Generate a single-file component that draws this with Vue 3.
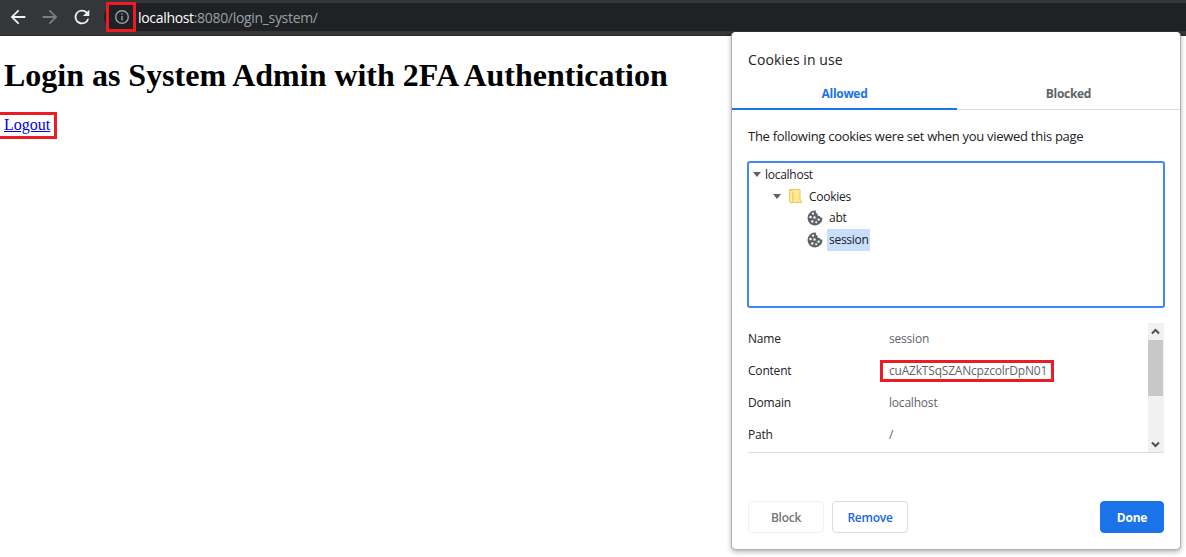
<script setup>
const fields = [
  { name: 'Name', value: 'session', cls: 'f-name' },
  { name: 'Content', value: 'cuAZkTSqSZANcpzcolrDpN01', cls: 'f-content', marked: true },
  { name: 'Domain', value: 'localhost', cls: 'f-domain' },
  { name: 'Path', value: '/', cls: 'f-path' },
]
const cookies = [
  { name: 'abt', selected: false },
  { name: 'session', selected: true },
]
</script>

<template>
  <div class="window">
    <header class="toolbar">
      <svg class="nav" viewBox="0 0 24 24"><path d="M20 11H7.8l5.6-5.6L12 4l-8 8 8 8 1.4-1.4L7.8 13H20z" /></svg>
      <svg class="nav dim" viewBox="0 0 24 24"><path d="M4 11h12.2l-5.6-5.6L12 4l8 8-8 8-1.4-1.4 5.6-5.6H4z" /></svg>
      <svg class="nav" viewBox="0 0 24 24"><path d="M17.65 6.35A8 8 0 1 0 19.73 14h-2.08A6 6 0 1 1 12 6c1.66 0 3.14.69 4.22 1.78L13 11h7V4z" /></svg>
      <div class="omnibox">
        <span class="info-mark">
          <svg viewBox="0 0 16 16"><circle cx="8" cy="8" r="6.300" /><path d="M8 7v4.500M8 4.300v1.500" /></svg>
        </span>
        <span class="url"><span class="host">localhost</span>:8080/login_system/</span>
      </div>
    </header>

    <main class="page">
      <h1>Login as System Admin with 2FA Authentication</h1>
      <div class="logout"><a>Logout</a></div>
    </main>

    <section class="dialog">
      <h2>Cookies in use</h2>
      <nav class="tabs">
        <div class="tab active">Allowed</div>
        <div class="tab">Blocked</div>
      </nav>
      <p class="intro">The following cookies were set when you viewed this page</p>
      <div class="tree">
        <div class="node root"><i class="caret"></i><span>localhost</span></div>
        <div class="node folder">
          <i class="caret"></i>
          <svg class="folder-icon" viewBox="0 0 13 15"><path class="back" d="M.5.500h10.500v9.500l1.500 2v1.500H3L.5 12.500z" /><path class="flap" d="M.5.500C2.500 1.500 3.800 2 3.800 4v7.500L2.600 14.300.5 12.500z" /></svg>
          <span>Cookies</span>
        </div>
        <div v-for="c in cookies" :key="c.name" class="node leaf">
          <svg class="cookie" viewBox="0 0 16 16">
            <path d="M8 .5a7.500 7.500 0 1 0 7.500 7.200c-1.300.3-2.500-.4-2.700-1.600-1.700.1-2.600-1-2.300-2.400C9.100 3.500 8.300 2 9 .6z" />
            <g><circle cx="6" cy="3.700" r="1.100" /><circle cx="3.500" cy="7" r="1.200" /><circle cx="7.500" cy="7.500" r="1.200" /><circle cx="5.300" cy="11.400" r="1.200" /><circle cx="9.200" cy="12.300" r="1" /><circle cx="11.600" cy="9.600" r="1.200" /></g>
          </svg>
          <span class="label" :class="{ selected: c.selected }">{{ c.name }}</span>
        </div>
      </div>
      <div class="details">
        <div class="rows">
          <div v-for="f in fields" :key="f.name" class="row" :class="f.cls">
            <span class="key">{{ f.name }}</span>
            <span class="value" :class="{ marked: f.marked }">{{ f.value }}</span>
          </div>
        </div>
        <div class="scrollbar">
          <svg viewBox="0 0 15 17"><path d="M4 10.500 7.500 7l3.500 3.500" /></svg>
          <div class="thumb"></div>
          <svg class="down" viewBox="0 0 15 17"><path d="M4 7.500 7.500 11 11 7.500" /></svg>
        </div>
      </div>
      <footer>
        <button class="block">Block</button>
        <button class="remove">Remove</button>
        <button class="done">Done</button>
      </footer>
    </section>
  </div>
</template>

<style>
body { margin: 0; background: #fff; }
</style>

<style scoped>
* { box-sizing: border-box; }
.window { position: relative; width: 1186px; height: 557px; overflow: hidden; background: #fff; font-family: "Open Sans", "Noto Sans", sans-serif; font-size: 12px; color: #202124; white-space: nowrap; }
.toolbar { height: 36px; display: flex; align-items: flex-start; background: #35363a; border-bottom: 1px solid #28292c; padding-left: 7px; }
.nav { width: 22px; height: 22px; margin: 6px 10px 0 0; fill: #f1f3f4; flex: none; }
.nav.dim { fill: #7d7e82; }
.omnibox { flex: 1; height: 28px; margin: 3px 0 0 1px; background: #202124; border-radius: 14px 0 0 14px; display: flex; align-items: center; }
.info-mark { width: 30px; height: 30px; margin: 0 2px 0 2px; border: 3px solid #ed1c24; padding-left: 2px; display: flex; align-items: center; justify-content: center; }
.info-mark svg { width: 16px; height: 16px; fill: none; stroke: #9aa0a6; stroke-width: 1.4; }
.url { color: #9aa0a6; font-size: 14px; letter-spacing: -.32px; }
.host { color: #fff; }
.page { height: 521px; }
h1 { margin: 0; padding: 19px 0 0 4px; height: 76px; font: bold 32px/40px "Liberation Serif", "Times New Roman", serif; color: #000; letter-spacing: -.015px; }
.logout { width: 57px; height: 27px; border: 3px solid #ed1c24; border-left: 0; padding-left: 4px; font: 16px/20px "Liberation Serif", "Times New Roman", serif; }
.logout a { color: #00e; text-decoration: underline; }
.dialog { position: absolute; left: 732px; top: 32px; width: 448px; height: 517px; background: #fff; border-radius: 4px; box-shadow: -.5px .5px 0 .5px #b0b1b3, .5px .5px 0 .5px #b0b1b3, 0 2px 5px 1px rgba(0, 0, 0, .3); }
h2 { margin: 0; height: 45px; padding: 17px 16px 0; font-size: 14px; line-height: 22px; font-weight: 400; letter-spacing: .08px; }
.tabs { height: 33px; display: grid; grid-template-columns: 225px 223px; border-bottom: 1px solid #dadce0; }
.tab { height: 33px; line-height: 33px; text-align: center; font-weight: 700; color: #5f6368; letter-spacing: -.3px; }
.tab.active { color: #1a73e8; border-bottom: 2px solid #1a73e8; }
.intro { margin: 0; height: 51px; padding: 16px 16px 0; font-size: 13px; line-height: 20px; letter-spacing: -.28px; }
.tree { width: 418px; height: 147px; margin-left: 15px; border: 2px solid #4285f4; border-radius: 3px; letter-spacing: -.27px; }
.node { height: 22px; display: flex; align-items: center; }
.caret { border: 4px solid transparent; border-top: 5px solid #5f6368; border-bottom: 0; }
.root { padding-left: 4px; gap: 4px; }
.folder { padding-left: 24px; }
.folder-icon { width: 13px; height: 15px; margin: 0 7px 0 8px; }
.back { fill: #ffe793; stroke: #ecc94f; }
.flap { fill: #ffeaa5; stroke: #ecc94f; }
.leaf { padding-left: 58px; }
.cookie { width: 16px; height: 16px; fill: #5f6368; }
.cookie g { fill: #fff; }
.label { height: 22px; line-height: 22px; padding: 0 2px; margin-left: 4px; }
.selected { width: 43px; background: #c9defa; }
.details { display: flex; width: 416px; height: 130px; margin: 15px 16px 0; border-bottom: 1px solid #dadce0; letter-spacing: -.2px; }
.rows { flex: 1; }
.row { height: 32px; line-height: 15px; padding-bottom: 1px; display: flex; align-items: center; }
.f-content { padding-bottom: 0; }
.f-content .key { padding-bottom: 1px; }
.key { width: 132px; }
.value { color: #5f6368; padding-left: 9px; }
.marked { width: 174px; height: 22px; line-height: 16px; border: 3px solid #ed1c24; padding-left: 6px; }
.scrollbar { width: 16px; background: #f1f1f1; }
.scrollbar svg { display: block; width: 15px; height: 17px; fill: none; stroke: #505050; stroke-width: 2; }
.thumb { width: 15px; height: 56px; margin-bottom: 39px; background: #c8c8c8; }
footer { display: flex; margin: 48px 16px 0; gap: 8px; }
button { width: 76px; height: 32px; padding: 0; border: 1px solid #dadce0; border-radius: 4px; background: #fff; font: 600 12px "Open Sans", sans-serif; letter-spacing: -.25px; }
.block { color: #757575; border-color: #f1f1f1; }
.remove { color: #1a66e0; }
.done { width: 64px; margin-left: auto; color: #fff; background: #1a73e8; border-color: #1a73e8; font-weight: 700; }
</style>
